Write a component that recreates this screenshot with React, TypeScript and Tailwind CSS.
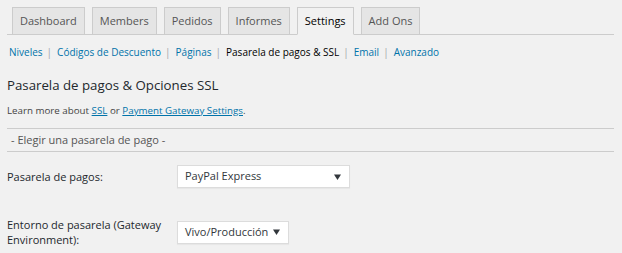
import React from 'react'

const TABS = ['Dashboard', 'Members', 'Pedidos', 'Informes', 'Settings', 'Add Ons']
const SUBNAV = ['Niveles', 'Códigos de Descuento', 'Páginas', 'Pasarela de pagos & SSL', 'Email', 'Avanzado']
const ACTIVE_TAB = 'Settings'
const ACTIVE_SUB = 'Pasarela de pagos & SSL'

function Caret() {
  return (
    <svg width="7" height="6" viewBox="0 0 7 6" className="shrink-0">
      <path d="M0 0.5 H7 L3.5 6 Z" fill="#32373c" />
    </svg>
  )
}

function FakeSelect({ value, width }: { value: string; width: string }) {
  return (
    <div
      className={`${width} h-[23px] bg-white border border-[#dcdcdc] flex items-center justify-between pl-[7px] pr-[8px] text-[11px] text-[#32373c] shadow-[0_1px_1px_rgba(0,0,0,0.04)]`}
    >
      <span>{value}</span>
      <Caret />
    </div>
  )
}

export default function App() {
  return (
    <div
      className="w-[622px] h-[253px] bg-[#f1f1f1] overflow-hidden text-[#23282d]"
      style={{ fontFamily: '"Open Sans", "Noto Sans", Arial, sans-serif' }}
    >
      {/* Tabs */}
      <div className="pt-[7px] ml-[7px] mr-[8px] border-b border-[#cccccc] flex pl-[5px] gap-[7px]">
        {TABS.map(t => {
          const active = t === ACTIVE_TAB
          return (
            <div
              key={t}
              className={`h-[28px] px-[7px] flex items-center border border-[#cccccc] text-[11px] -mb-px ${
                active ? 'bg-[#f1f1f1] border-b-[#f1f1f1] text-black' : 'bg-[#e5e5e5] text-[#555555]'
              }`}
            >
              {t}
            </div>
          )
        })}
      </div>

      {/* Sub navigation */}
      <div className="mt-[10px] pl-[9px] flex items-center text-[10px] leading-[14px]">
        {SUBNAV.map((s, i) => (
          <React.Fragment key={s}>
            <span className={s === ACTIVE_SUB ? 'text-black' : 'text-[#0073aa]'}>{s}</span>
            {i < SUBNAV.length - 1 && <span className="text-[#a0a5aa] ml-[4px] mr-[5px]">|</span>}
          </React.Fragment>
        ))}
      </div>

      {/* Heading */}
      <h2 className="mt-[17px] pl-[7px] text-[13.25px] leading-[18px] text-[#23282d]">
        Pasarela de pagos &amp; Opciones SSL
      </h2>

      <p className="mt-[10px] pl-[7px] text-[9.75px] leading-[14px] text-[#444]">
        Learn more about <span className="text-[#0073aa] underline">SSL</span> or{' '}
        <span className="text-[#0073aa] underline">Payment Gateway Settings</span>.
      </p>

      {/* Section header */}
      <div className="mt-[10px] ml-[7px] mr-[8px] border-t border-b border-[#cccccc] h-[24px] flex items-center pl-[4px] text-[11px] text-[#555]">
        - Elegir una pasarela de pago -
      </div>

      {/* Form rows */}
      <div className="pl-[7px] mt-[13px] flex items-center">
        <div className="w-[170px] text-[11px] leading-[15px]">Pasarela de pagos:</div>
        <FakeSelect value="PayPal Express" width="w-[173px]" />
      </div>

      <div className="pl-[7px] mt-[29px] flex items-center">
        <div className="w-[170px] text-[11px] leading-[15px]">
          Entorno de pasarela (Gateway
          <br />
          Environment):
        </div>
        <FakeSelect value="Vivo/Producción" width="w-[112px]" />
      </div>
    </div>
  )
}
